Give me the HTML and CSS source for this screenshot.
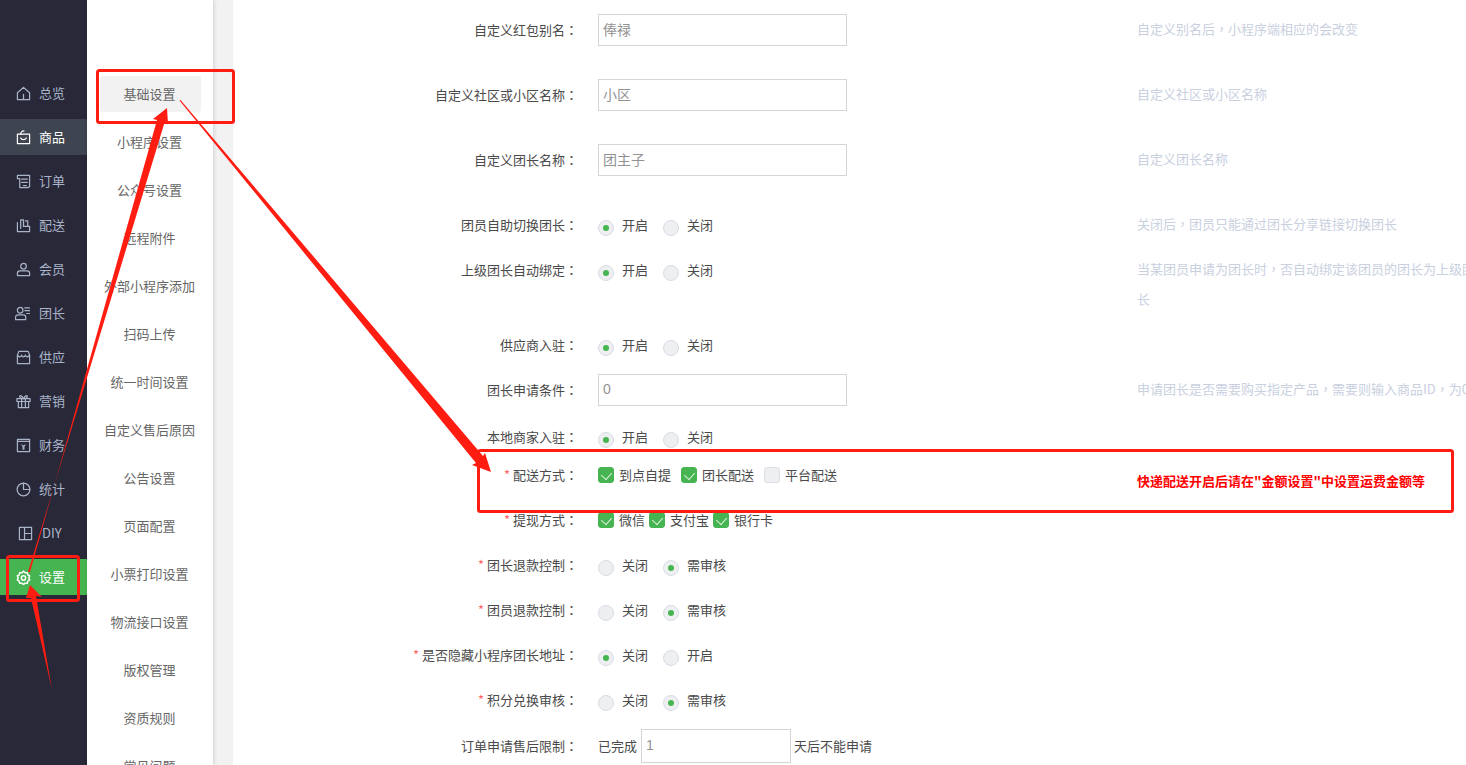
FILE: index.html
```html
<!DOCTYPE html>
<html>
<head>
<meta charset="utf-8">
<title>基础设置</title>
<link rel="stylesheet" href="styles.css">
</head>
<body>
<div class="app">
  <nav class="nav">
    <a class="nav-item"><svg class="ico" viewBox="0 0 16 16"><path d="M1.500 7.200 8 1.500l6.500 5.700V14.500h-13z"/><path d="M8 9v5.500"/></svg>总览</a>
    <a class="nav-item active"><svg class="ico" viewBox="0 0 16 16"><path d="M1.500 4.500h13v10h-13z"/><path d="M5 4.500C5 2.500 6.500 1 8.500 1"/><path d="M5 8.500c1 2.500 5 2.500 6 0"/></svg>商品</a>
    <a class="nav-item"><svg class="ico" viewBox="0 0 16 16"><path d="M4 14.500h8.500l2-1V1.500h-13V5H4z"/><path d="M6 5.500h6M6 9h6M8 12.500h3"/></svg>订单</a>
    <a class="nav-item"><svg class="ico" viewBox="0 0 16 16"><path d="M1.500 5v9.500h13V9H8V2H5v9"/><path d="M10 3h2.500v6"/></svg>配送</a>
    <a class="nav-item"><svg class="ico" viewBox="0 0 16 16"><circle cx="8" cy="4.500" r="3"/><path d="M1.500 14.500v-2.500c0-1.500 1-2.500 2.500-2.500h8c1.500 0 2.500 1 2.500 2.500v2.500z"/></svg>会员</a>
    <a class="nav-item leader"><svg class="ico" viewBox="0 0 16 16"><circle cx="5.500" cy="4.500" r="3"/><path d="M.5 14.500v-2c0-1.500 1-3 2.500-3h6c1.500 0 2.500 1.500 2.500 3v2z"/><path d="M10.500 2h5M10.500 5h5M12.500 8h3"/></svg>团长</a>
    <a class="nav-item"><svg class="ico" viewBox="0 0 16 16"><path d="M3 1.500h10l1.500 4v9h-13v-9z"/><path d="M1.500 5.500c1.500 2.500 3.500 2.500 4.500 0 .8 2.500 3.200 2.500 4 0 1 2.500 3 2.500 4.500 0"/></svg>供应</a>
    <a class="nav-item"><svg class="ico" viewBox="0 0 16 16"><path d="M1 5h14v3H1zM2.500 8v6.500h11V8M6 5v9.500M10 5v9.500"/><path d="M8 5C6 1 3.500 1 4 3s2 2 4 2c2 0 3.500 0 4-2s-2-2-4 2z"/></svg>营销</a>
    <a class="nav-item"><svg class="ico" viewBox="0 0 16 16"><path d="M1.500 1.500h13v13h-13zM1.500 3.500h13"/><path class="solid" d="M5.500 6.500 8 8l2.500-1.500L9 9.500v3H7v-3z"/></svg>财务</a>
    <a class="nav-item"><svg class="ico" viewBox="0 0 16 16"><circle cx="8" cy="8" r="6.800"/><path d="M8 1.200V8h6.800"/></svg>统计</a>
    <a class="nav-item diy"><svg class="ico" viewBox="0 0 16 16"><path d="M1.500 1.500h13v13h-13zM7 1.500v13M7 8h7.500"/></svg>DIY</a>
    <a class="nav-item current"><svg class="ico gear" viewBox="0 0 16 16"><path d="M8 1.200 9.600 3l2.400-.2.600 2.300 2 1.300L13.600 8.500l1 2.100-2 1.300-.6 2.300-2.400-.2L8 15.600 6.400 14l-2.400.2-.6-2.300-2-1.300 1-2.100-1-2.100 2-1.300.6-2.300 2.400.2z"/><circle cx="8" cy="8.500" r="2.300"/></svg>设置</a>
  </nav>

  <aside class="sub">
    <a class="sub-item active">基础设置</a>
    <a class="sub-item">小程序设置</a>
    <a class="sub-item">公众号设置</a>
    <a class="sub-item">远程附件</a>
    <a class="sub-item">外部小程序添加</a>
    <a class="sub-item">扫码上传</a>
    <a class="sub-item">统一时间设置</a>
    <a class="sub-item">自定义售后原因</a>
    <a class="sub-item">公告设置</a>
    <a class="sub-item">页面配置</a>
    <a class="sub-item">小票打印设置</a>
    <a class="sub-item">物流接口设置</a>
    <a class="sub-item">版权管理</a>
    <a class="sub-item">资质规则</a>
    <a class="sub-item">常见问题</a>
  </aside>

  <main class="gutter">
    <form class="panel">
      <div class="row g65"><label class="lab">自定义红包别名<span class="p">：</span></label><div class="ctl"><input class="inp" value="俸禄"></div><p class="hint">自定义别名后<span class="p">，</span>小程序端相应的会改变</p></div>
      <div class="row g65"><label class="lab">自定义社区或小区名称<span class="p">：</span></label><div class="ctl"><input class="inp" value="小区"></div><p class="hint">自定义社区或小区名称</p></div>
      <div class="row g65"><label class="lab">自定义团长名称<span class="p">：</span></label><div class="ctl"><input class="inp" value="团主子"></div><p class="hint">自定义团长名称</p></div>
      <div class="row"><label class="lab">团员自助切换团长<span class="p">：</span></label><div class="ctl"><i class="radio on"></i><span class="opt">开启</span><i class="radio"></i><span class="opt">关闭</span></div><p class="hint">关闭后<span class="p">，</span>团员只能通过团长分享链接切换团长</p></div>
      <div class="row g75"><label class="lab">上级团长自动绑定<span class="p">：</span></label><div class="ctl"><i class="radio on"></i><span class="opt">开启</span><i class="radio"></i><span class="opt">关闭</span></div><p class="hint">当某团员申请为团长时<span class="p">，</span>否自动绑定该团员的团长为上级团长</p></div>
      <div class="row"><label class="lab">供应商入驻<span class="p">：</span></label><div class="ctl"><i class="radio on"></i><span class="opt">开启</span><i class="radio"></i><span class="opt">关闭</span></div></div>
      <div class="row g47"><label class="lab">团长申请条件<span class="p">：</span></label><div class="ctl"><input class="inp" value="0"></div><p class="hint nowrap">申请团长是否需要购买指定产品<span class="p">，</span>需要则输入商品ID<span class="p">，</span>为0</p></div>
      <div class="row g38"><label class="lab">本地商家入驻<span class="p">：</span></label><div class="ctl"><i class="radio on"></i><span class="opt">开启</span><i class="radio"></i><span class="opt">关闭</span></div></div>
      <div class="row"><label class="lab"><em>*</em>配送方式<span class="p">：</span></label><div class="ctl"><i class="check on"></i><span class="copt">到点自提</span><i class="check on"></i><span class="copt">团长配送</span><i class="check"></i><span class="copt">平台配送</span></div><p class="hint alert">快递配送开启后请在"金额设置"中设置运费金额等</p></div>
      <div class="row"><label class="lab"><em>*</em>提现方式<span class="p">：</span></label><div class="ctl tight"><i class="check on"></i><span class="copt">微信</span><i class="check on"></i><span class="copt">支付宝</span><i class="check on"></i><span class="copt">银行卡</span></div></div>
      <div class="row"><label class="lab"><em>*</em>团长退款控制<span class="p">：</span></label><div class="ctl"><i class="radio"></i><span class="opt">关闭</span><i class="radio on"></i><span class="opt">需审核</span></div></div>
      <div class="row"><label class="lab"><em>*</em>团员退款控制<span class="p">：</span></label><div class="ctl"><i class="radio"></i><span class="opt">关闭</span><i class="radio on"></i><span class="opt">需审核</span></div></div>
      <div class="row"><label class="lab"><em>*</em>是否隐藏小程序团长地址<span class="p">：</span></label><div class="ctl"><i class="radio on"></i><span class="opt">关闭</span><i class="radio"></i><span class="opt">开启</span></div></div>
      <div class="row g46"><label class="lab"><em>*</em>积分兑换审核<span class="p">：</span></label><div class="ctl"><i class="radio"></i><span class="opt">关闭</span><i class="radio on"></i><span class="opt">需审核</span></div></div>
      <div class="row last"><label class="lab">订单申请售后限制<span class="p">：</span></label><div class="ctl"><span>已完成</span><input class="inp short" value="1"><span>天后不能申请</span></div></div>
    </form>
  </main>
</div>

<svg class="marks" viewBox="0 0 1466 765" aria-hidden="true">
  <rect class="box" x="97.500" y="70.500" width="136" height="52" rx="2"/>
  <rect class="box" x="7.500" y="556.500" width="71" height="44" rx="2"/>
  <rect class="box" x="478.500" y="450.500" width="974" height="61" rx="2"/>
  <polygon class="arrow" points="28,572 30,572 157,120 153,119 167,108 168,124 165,121"/>
  <polygon class="arrow" points="30,585 42,597 36,596 52,690 31,598 26,598"/>
  <polygon class="arrow" points="179.500,100.500 180.500,100 483,456 485,453 491,472 472,465 476,463"/>
</svg>
</body>
</html>
```

FILE: styles.css
```css
* { box-sizing: border-box; }
html, body { margin: 0; height: 765px; overflow: hidden; }
body {
  position: relative;
  width: 1466px;
  font: 13px/30px "Noto Sans CJK SC", "Liberation Sans", sans-serif;
  color: #4a4a4a;
  background: #fff;
}
.app { display: flex; height: 765px; overflow: hidden; }

.nav {
  flex: 0 0 87px;
  padding-top: 75px;
  background: #282838;
  display: flex;
  flex-direction: column;
  gap: 8px;
}
.nav-item {
  flex: 0 0 36px;
  display: flex;
  align-items: center;
  gap: 8px;
  padding: 0 0 1px 16px;
  color: #a9b4c8;
}
.nav-item.active { background: #3e4450; color: #fff; }
.nav-item.current { background: #46b450; color: #fff; }
.nav-item.leader { gap: 9px; padding-left: 15px; }
.nav-item.diy { gap: 9px; padding-left: 18px; }
.ico {
  width: 15px;
  height: 15px;
  margin-top: 1px;
  fill: none;
  stroke: currentColor;
  stroke-width: 1.300;
  stroke-linejoin: round;
  stroke-linecap: round;
  flex: none;
}
.ico.gear { stroke-width: 1.600; }
.ico .solid { fill: currentColor; stroke: none; }

.sub {
  flex: 0 0 126px;
  position: relative;
  z-index: 1;
  padding-top: 76px;
  background: #fff;
  box-shadow: 1px 0 4px rgba(0, 0, 0, .14);
  display: flex;
  flex-direction: column;
  gap: 12px;
}
.sub-item {
  flex: 0 0 36px;
  margin: 0 12px 0 13px;
  padding-right: 2px;
  border-radius: 3px;
  line-height: 35px;
  text-align: center;
  white-space: nowrap;
  color: #666;
}
.sub-item.active { background: #f2f2f2; }

.gutter {
  flex: 1;
  min-width: 0;
  padding-left: 20px;
  background: #f2f2f2;
}
.panel {
  height: 765px;
  padding-top: 14px;
  background: #fff;
  overflow: hidden;
}

.row {
  display: grid;
  grid-template-columns: 365px 539px 345px;
  grid-template-rows: 32px;
  height: 32px;
  margin-bottom: 13px;
  align-items: center;
}
.g65 { margin-bottom: 33px; }
.g75 { margin-bottom: 43px; }
.g47 { margin-bottom: 15px; }
.g46 { margin-bottom: 14px; }
.g38 { margin-bottom: 6px; }
.last { grid-template-rows: 34px; height: 34px; margin-bottom: 0; margin-top: -1px; }

.p { font-family: "Noto Sans CJK TC", "Noto Sans CJK SC", sans-serif; }

.lab {
  padding-right: 20px;
  text-align: right;
  white-space: nowrap;
  margin-top: -1px;
}
.lab em { margin-right: 3px; font-style: normal; color: #f66; }

.ctl { display: flex; align-items: center; white-space: nowrap; }
.inp {
  display: block;
  width: 249px;
  height: 32px;
  padding: 0 4px 2px;
  border: 1px solid #d5d5d5;
  background: #fff;
  font: 14px "Liberation Sans", "Noto Sans CJK SC", sans-serif;
  color: #929292;
  outline: 0;
}
.inp.short { width: 150px; height: 34px; margin: 0 3px 0 4px; }

.radio {
  flex: none;
  position: relative;
  width: 16px;
  height: 16px;
  margin: 6px 8px 0 0;
  border: 1px solid #d8dce6;
  border-radius: 50%;
  background: #eeeff1;
}
.radio.on::after {
  content: "";
  position: absolute;
  left: 4px;
  top: 4px;
  width: 6px;
  height: 6px;
  border-radius: 50%;
  background: #46b450;
}
.opt { flex: 0 0 41px; margin-top: -1px; }

.check {
  flex: none;
  position: relative;
  width: 16px;
  height: 16px;
  margin-right: 5px;
  border: 1px solid #dcdfe6;
  border-radius: 3px;
  background: #eeeff1;
}
.check.on { border-color: #46b450; background: #46b450; }
.check.on::after {
  content: "";
  position: absolute;
  left: 4px;
  top: 2px;
  width: 6px;
  height: 8px;
  border: solid #d8efd9;
  border-width: 0 1.500px 1.500px 0;
  transform: rotate(42deg);
}
.copt { margin-right: 10px; margin-top: -1px; }
.tight .copt { margin-right: 4px; }

.hint {
  margin: 0;
  align-self: start;
  color: #c9d0e0;
}
.nowrap { white-space: nowrap; }
.alert {
  margin-top: 7px;
  font-weight: 700;
  color: #f00;
  white-space: nowrap;
}

.marks {
  position: absolute;
  left: 0;
  top: 0;
  z-index: 2;
  width: 1466px;
  height: 765px;
  pointer-events: none;
}
.box { fill: none; stroke: #ff1d12; stroke-width: 3; }
.arrow { fill: #ff1d12; }
```
